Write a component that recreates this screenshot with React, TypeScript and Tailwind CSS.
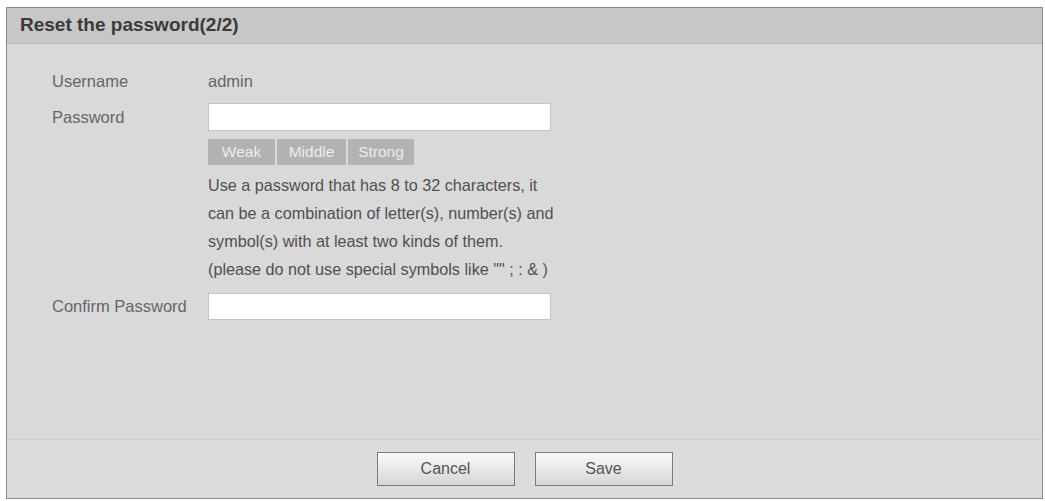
const App = () => {
  return (
    <div className="w-[1045px] h-[501px] bg-white pt-[7px] pl-[6px] font-['Liberation_Sans',Arial,sans-serif]">
      <div className="w-[1037px] h-[492px] border border-[#8a8a8a] bg-[#d9d9d9] flex flex-col">
        {/* Header */}
        <div className="h-[36px] shrink-0 bg-[#c7c7c7] border-b border-[#b9b9b9] flex items-center pl-[13px]">
          <h1 className="text-[19px] font-bold text-[#3a3a3a]">Reset the password(2/2)</h1>
        </div>

        {/* Body */}
        <div className="flex-1 pl-[45px] pt-[23px]">
          <div className="flex items-center h-[28px] text-[16.5px] text-[#666]">
            <div className="w-[156px]">Username</div>
            <div>admin</div>
          </div>
          <div className="flex mt-[8px]">
            <div className="w-[156px] h-[28px] flex items-center text-[16.5px] text-[#666]">Password</div>
            <div>
              <div className="w-[343px] h-[28px] bg-white border border-[#c4c4c4]" />
              <div className="flex gap-[2px] mt-[8px]">
                <div className="w-[67px] h-[26px] bg-[#b2b2b2] text-[#ececec] text-[15.5px] flex items-center justify-center">Weak</div>
                <div className="w-[69px] h-[26px] bg-[#b2b2b2] text-[#ececec] text-[15.5px] flex items-center justify-center">Middle</div>
                <div className="w-[66px] h-[26px] bg-[#b2b2b2] text-[#ececec] text-[15.5px] flex items-center justify-center">Strong</div>
              </div>
              <div className="mt-[6px] text-[16.2px] leading-[28px] text-[#505050]">
                <p>Use a password that has 8 to 32 characters, it</p>
                <p>can be a combination of letter(s), number(s) and</p>
                <p>symbol(s) with at least two kinds of them.</p>
                <p>(please do not use special symbols like &quot;&quot; ; : &amp; )</p>
              </div>
            </div>
          </div>
          <div className="flex mt-[10px]">
            <div className="w-[156px] h-[27px] flex items-center text-[16.5px] text-[#666]">Confirm Password</div>
            <div className="w-[343px] h-[27px] bg-white border border-[#c4c4c4]" />
          </div>
        </div>

        {/* Footer */}
        <div className="h-[59px] shrink-0 border-t border-[#cfcfcf] bg-[#dcdcdc] flex items-center justify-center gap-[20px]">
          <button className="w-[138px] h-[34px] border border-[#7a7a7a] bg-gradient-to-b from-[#fafafa] to-[#d6d6d6] text-[16px] text-[#555]">
            Cancel
          </button>
          <button className="w-[138px] h-[34px] border border-[#7a7a7a] bg-gradient-to-b from-[#fafafa] to-[#d6d6d6] text-[16px] text-[#555]">
            Save
          </button>
        </div>
      </div>
    </div>
  );
};

export default App;
